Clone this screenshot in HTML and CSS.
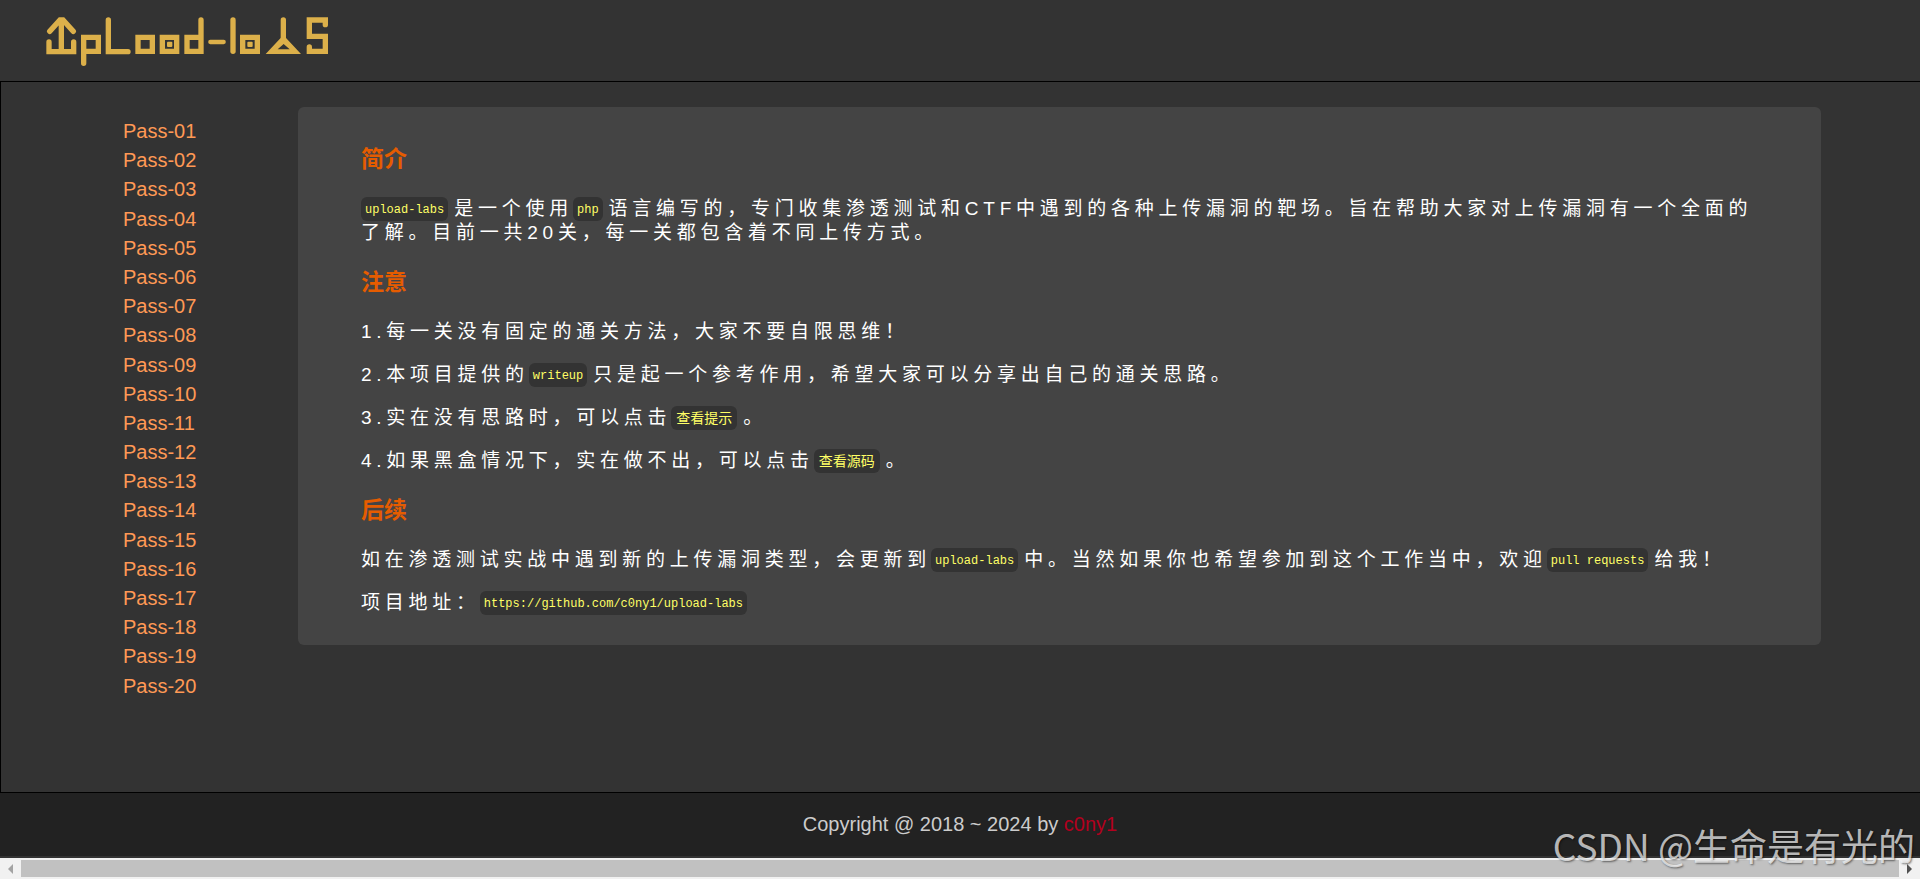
FILE: index.html
```
<!DOCTYPE html>
<html lang="zh">
<head>
    <meta charset="UTF-8" />
    <meta name="viewport" content="width=device-width, initial-scale=1" />
    <title>upload-labs</title>
    <link rel="stylesheet" href="styles.css">
</head>
<body>
    <header class="head">
        <a href="#" class="logo" aria-label="upload-labs">
            <svg width="287" height="56" viewBox="132 42 861 168" fill="none" stroke="#dcb04a" stroke-width="16" stroke-linejoin="miter" stroke-linecap="round">
                <!-- U -->
                <path d="M184 62V155M149 94L180 60H189L220 94M147 126V155H221V126" />
                <!-- p L o a d -->
                <path d="M251 190V112H295V154H251" />
                <path d="M325 60V155H384" />
                <path d="M414 112H457V154H414Z" />
                <path d="M487 112H530V154H487Z" />
                <path d="M561 112H603V154H561ZM603 112V60" />
                <path d="M631 126H671" stroke-width="13" />
                <!-- l a b s -->
                <path d="M699 60V154" />
                <path d="M728 112H772V154H728Z" />
                <path d="M850 60V112" />
                <path d="M976 74V60H928V109H976V154H928V141" />
                <g fill="#dcb04a" stroke="none">
                    <rect x="501" y="125" width="16" height="16" rx="3" />
                    <rect x="742" y="125" width="16" height="16" rx="3" />
                    <path d="M797 162L844 112H856L903 162Z M833 148H869L851 132Z" fill-rule="evenodd" />
                </g>
            </svg>
        </a>
    </header>

    <main class="main">
        <nav class="menu">
            <ul>
                <li><a href="#">Pass-01</a></li>
                <li><a href="#">Pass-02</a></li>
                <li><a href="#">Pass-03</a></li>
                <li><a href="#">Pass-04</a></li>
                <li><a href="#">Pass-05</a></li>
                <li><a href="#">Pass-06</a></li>
                <li><a href="#">Pass-07</a></li>
                <li><a href="#">Pass-08</a></li>
                <li><a href="#">Pass-09</a></li>
                <li><a href="#">Pass-10</a></li>
                <li><a href="#">Pass-11</a></li>
                <li><a href="#">Pass-12</a></li>
                <li><a href="#">Pass-13</a></li>
                <li><a href="#">Pass-14</a></li>
                <li><a href="#">Pass-15</a></li>
                <li><a href="#">Pass-16</a></li>
                <li><a href="#">Pass-17</a></li>
                <li><a href="#">Pass-18</a></li>
                <li><a href="#">Pass-19</a></li>
                <li><a href="#">Pass-20</a></li>
            </ul>
        </nav>
        <section class="panel">
            <h3>简介</h3>
            <p><code>upload-labs</code>是一个使用<code>php</code>语言编写的，专门收集渗透测试和CTF中遇到的各种上传漏洞的靶场。旨在帮助大家对上传漏洞有一个全面的了解。目前一共20关，每一关都包含着不同上传方式。</p>
            <h3>注意</h3>
            <p>1.每一关没有固定的通关方法，大家不要自限思维！</p>
            <p>2.本项目提供的<code>writeup</code>只是起一个参考作用，希望大家可以分享出自己的通关思路。</p>
            <p>3.实在没有思路时，可以点击<code class="zh">查看提示</code>。</p>
            <p>4.如果黑盒情况下，实在做不出，可以点击<code class="zh">查看源码</code>。</p>
            <h3>后续</h3>
            <p>如在渗透测试实战中遇到新的上传漏洞类型，会更新到<code>upload-labs</code>中。当然如果你也希望参加到这个工作当中，欢迎<code>pull requests</code>给我！</p>
            <p>项目地址：<a href="#"><code>https://github.com/c0ny1/upload-labs</code></a></p>
        </section>
    </main>

    <footer class="footer">
        Copyright @ 2018 ~ 2024 by <a href="#">c0ny1</a>
    </footer>

    <div class="scrollbar">
        <button type="button" class="arrow left" aria-label="left"></button>
        <div class="thumb"></div>
        <button type="button" class="arrow right" aria-label="right"></button>
    </div>

    <div class="watermark">CSDN @生命是有光的</div>
</body>
</html>
```
FILE: styles.css
```
* {
    box-sizing: border-box;
    margin: 0;
    padding: 0;
}
body {
    position: relative;
    display: flex;
    flex-direction: column;
    min-height: 100vh;
    overflow-x: hidden;
    background: #333;
    color: #fff;
    font-family: "Liberation Sans", Arial, "Noto Sans CJK SC", sans-serif;
    font-size: 20px;
}
a {
    text-decoration: none;
}
.head {
    padding: 14px 44px 11px;
}
.logo, .logo svg {
    display: block;
}
.logo {
    width: 287px;
}

/* menu + content */
.main {
    flex: 1;
    display: flex;
    align-items: flex-start;
    border: 1px solid #000;
    border-right: none;
}
.menu {
    flex: none;
    width: 297px;
    padding: 35px 20px 34px 122px;
}
.menu ul {
    list-style: none;
}
.menu li {
    line-height: 1.46;
}
.menu a {
    color: #ff9955;
}
.panel {
    flex: 1;
    margin: 25px 99px 25px 0;
    padding: 15px 63px 11px;
    border-radius: 6px;
    background: #444;
}
.panel h3 {
    margin: 23px 0;
    color: #e65c00;
    font-size: 23px;
    line-height: 29px;
}
.panel p {
    margin-bottom: 19px;
    font-size: 19px;
    line-height: 24px;
    letter-spacing: 0.25em;
}
.panel code {
    display: inline-block;
    margin-right: 6px;
    padding: 2px 4px 0;
    border-radius: 6px;
    background: #333;
    color: #ffff66;
    font-family: "Liberation Mono", "Noto Sans CJK SC", monospace;
    font-size: 12px;
    line-height: 22px;
    letter-spacing: 0;
    vertical-align: top;
}
.panel code.zh {
    padding: 2px 5px 0;
    font-size: 14px;
}

.footer {
    margin-bottom: 2px;
    padding: 20px;
    background: #222;
    color: #ccc;
    line-height: 23px;
    text-align: center;
}
.footer a {
    color: #b3001e;
}

/* horizontal scrollbar */
.scrollbar {
    display: flex;
    align-items: center;
    height: 21px;
    background: #f1f1f1;
}
.thumb {
    flex: 1;
    height: 17px;
    background: #c1c1c1;
}
.arrow {
    flex: none;
    display: flex;
    align-items: center;
    justify-content: center;
    width: 21px;
    height: 21px;
    border: none;
    background: none;
}
.arrow::before {
    content: '';
    width: 0;
    border: 5px solid transparent;
    border-left: none;
    border-right: 5px solid #a3a3a3;
}
.arrow.right::before {
    border-right: none;
    border-left: 5px solid #505050;
}

.watermark {
    position: absolute;
    right: 5px;
    bottom: 7px;
    color: rgba(255, 255, 255, 0.7);
    font-family: "Noto Sans CJK SC", sans-serif;
    font-size: 37px;
    line-height: 54px;
    text-shadow: 1px 1px 2px rgba(0, 0, 0, 0.5);
    pointer-events: none;
}
```
